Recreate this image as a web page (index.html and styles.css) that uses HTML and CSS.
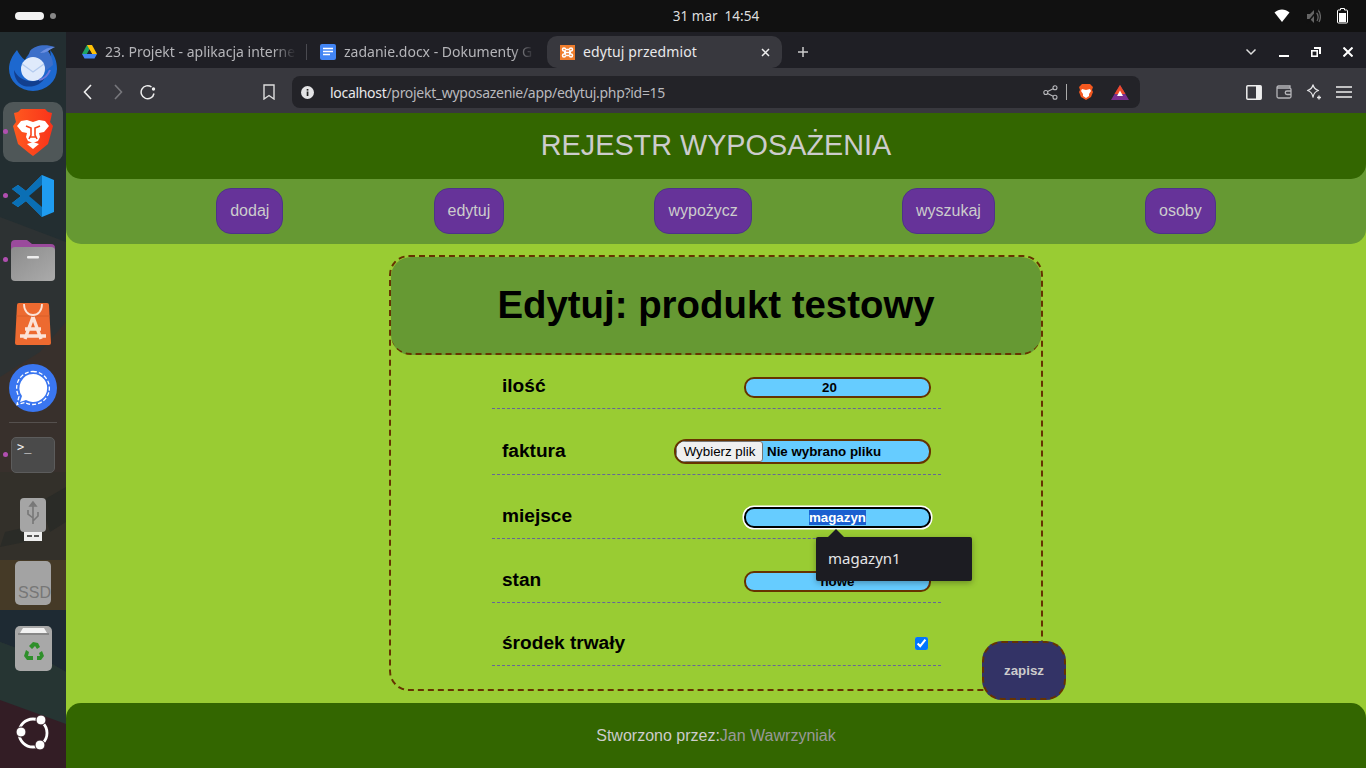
FILE: index.html
```html
<!DOCTYPE html>
<html lang="pl">
<head>
<meta charset="utf-8">
<title>edytuj przedmiot</title>
<link rel="stylesheet" href="styles.css">
</head>
<body>
<div class="topbar">
  <div class="workspaces"><span class="ws-pill"></span><span class="ws-dot"></span></div>
  <div class="clock">31 mar&nbsp;&nbsp;14:54</div>
  <div class="tray">
    <svg width="16" height="14" viewBox="0 0 16 14"><path d="M0.500 3.500C5 -0.600 11 -0.600 15.500 3.500L8 13Z" fill="#fff"/></svg>
    <svg width="15" height="15" viewBox="0 0 15 15" fill="#666"><path d="M1 5h3l4-4v13l-4-4H1z"/><path d="M10 3c2 2 3 6 1 9M12 1c3 3 3 9 1 12" fill="none" stroke="#666" stroke-width="1.300"/><path d="M1 14L12 1" stroke="#111" stroke-width="1.500"/></svg>
    <svg width="11" height="16" viewBox="0 0 11 16"><path d="M3.500 .5h4v1.500h2a1 1 0 0 1 1 1v11a1 1 0 0 1-1 1h-8a1 1 0 0 1-1-1V3a1 1 0 0 1 1-1h2z" fill="none" stroke="#fff"/><rect x="2" y="5" width="7" height="9" fill="#fff"/></svg>
  </div>
</div>
<div class="desktop">
  <aside class="dock">
    <svg class="dock-bg" width="66" height="736" viewBox="0 0 66 736">
      <rect width="66" height="736" fill="#232e31"/>
      <path d="M0 185L66 210V736H0Z" fill="#2d3233"/>
      <path d="M0 345L40 320L66 290V440H0Z" fill="#38302c"/>
      <path d="M0 440H66V528H0Z" fill="#33302a"/>
      <path d="M40 470L66 455V490L50 500ZM5 500L40 492L25 510L0 515Z" fill="#2a2b27"/>
      <path d="M0 528H66V578H0Z" fill="#453a27"/>
      <path d="M0 578H66V640L40 625L0 610Z" fill="#1e2a33"/>
      <path d="M0 610L40 625L66 640V736H0Z" fill="#263533"/>
      <path d="M0 668L66 692V736H0Z" fill="#331d25"/>
    </svg>
    <div class="dock-item dock-mail">
      <svg width="48" height="46" viewBox="0 0 48 46">
        <path d="M8 5C3 11 0 17 0 24a24 22 0 0 0 48 0C48 16 45 9 41 5l1 7C39 7 34 4 28 5c-6 1-10 5-12 10-3-2-6-6-8-10z" fill="#1d68cf"/>
        <path d="M21 6C26 0 36-1 46 2c-2 1-5 2-7 4 3 4 5 9 5 14L34 28 18 14z" fill="#3c6fc9"/>
        <path d="M46 2c-2 1-5 2-7 4-1 1-5 2-8 2 4-4 9-6 15-6z" fill="#6b8fe0"/>
        <circle cx="24" cy="24" r="12" fill="#dfeafb"/>
        <path d="M13 19l11 8 11-8" fill="none" stroke="#b3cbef" stroke-width="1.400"/>
        <path d="M5 25c5 11 19 15 31 7-3 8-13 11-21 9C9 39 5 33 5 25z" fill="#123f8f"/>
        <path d="M30 35c5-1 9-5 11-10" fill="none" stroke="#6f78d8" stroke-width="2"/>
      </svg>
    </div>
    <div class="dock-item is-active">
      <span class="run-dot"></span>
      <svg width="40" height="48" viewBox="0 0 40 48">
        <defs><linearGradient id="bravefill" x1="0" y1="0" x2="1" y2="0"><stop offset="0" stop-color="#ff5a1f"/><stop offset="1" stop-color="#f9331a"/></linearGradient></defs>
        <path d="M8 1h24l3 3 4 1-1 5-1 4 3 4-5 18-11 9-4 3-4-3-11-9L0 18l3-4-1-4-1-5 4-1z" fill="url(#bravefill)"/>
        <path d="M8 13l6-1 6 2 6-2 6 1 4 5-5 6-5 1 1 4-2 4-5 2-5-2-2-4 1-4-5-1-5-6z" fill="#fff"/>
        <path d="M13 18l5 2 0 7-2 4M27 18l-5 2 0 7 2 4M17 29h6" stroke="#f9431a" stroke-width="1.600" fill="none"/>
        <path d="M14 36l6-2 6 2-6 5z" fill="#fff"/>
      </svg>
    </div>
    <div class="dock-item">
      <span class="run-dot"></span>
      <svg width="42" height="42" viewBox="0 0 42 42">
        <path d="M30 0l12 5v32l-12 5-16-16-8 6-6-4 9-7-9-7 6-4 8 6z" fill="#1f9cf0"/>
        <path d="M30 0L14 16 6 10 0 14l9 7-9 7 6 4 8-6L30 42V30L20 21l10-9z" fill="#0a6fb5"/>
        <path d="M30 10v22l-13-11z" fill="#232e31"/>
      </svg>
    </div>
    <div class="dock-item">
      <span class="run-dot"></span>
      <svg width="44" height="41" viewBox="0 0 44 41">
        <path d="M0 4a4 4 0 0 1 4-4h12l5 4h19a4 4 0 0 1 4 4v8H0z" fill="#9a4a9c"/>
        <defs><linearGradient id="folderfill" x1="0" y1="0" x2="1" y2="1"><stop offset="0" stop-color="#8c8c8c"/><stop offset="1" stop-color="#ababab"/></linearGradient></defs>
        <rect y="7" width="44" height="34" rx="4" fill="url(#folderfill)"/>
        <rect x="16" y="16" width="12" height="2.500" rx="1" fill="#eee"/>
      </svg>
    </div>
    <div class="dock-item">
      <svg width="36" height="42" viewBox="0 0 36 42">
        <path d="M4 0h28a2 2 0 0 1 2 2l2 38a2 2 0 0 1-2 2H2a2 2 0 0 1-2-2L2 2a2 2 0 0 1 2-2z" fill="#ed6a30"/>
        <path d="M1.500 13H34.500" stroke="#d85f28" stroke-width="1"/>
        <path d="M9 1c0 7 4 11 9 11s9-4 9-11" fill="none" stroke="#fbe3d8" stroke-width="1.800"/>
        <path d="M18 14L10 36M18 14l8 22M5 33h26M10 26h16" stroke="#fbe3d8" stroke-width="3.400" fill="none"/>
      </svg>
    </div>
    <div class="dock-item">
      <svg width="48" height="48" viewBox="0 0 48 48">
        <circle cx="24" cy="24" r="24" fill="#3a76f0"/>
        <path d="M24 10a14 14 0 1 1-7 26l-6 2 2-6a14 14 0 0 1 11-22z" fill="#fff"/>
        <path d="M24 7.500a16.500 16.500 0 1 1-8 31l-8 2 2-8a16.500 16.500 0 0 1 14-25z" fill="none" stroke="#fff" stroke-width="1.300" stroke-dasharray="4 2"/>
      </svg>
    </div>
    <div class="dock-sep"></div>
    <div class="dock-item terminal-item">
      <span class="run-dot"></span>
      <div class="term"><span class="term-prompt">&gt;_</span></div>
    </div>
    <div class="dock-item usb-item">
      <svg width="26" height="44" viewBox="0 0 26 44">
        <rect x="4" y="32" width="18" height="11" fill="#eee"/>
        <rect x="7" y="37" width="5" height="2" fill="#555"/><rect x="14" y="37" width="5" height="2" fill="#555"/>
        <rect width="26" height="34" rx="4" fill="#a5a5a5"/>
        <path d="M13 4v22M13 4l-3 4h6zM13 20L8 16v-4M13 23l5-5v-4" fill="none" stroke="#777" stroke-width="1.600"/>
      </svg>
    </div>
    <div class="dock-item ssd-item"><div class="ssd">SSD</div></div>
    <div class="dock-item trash-item">
      <svg width="37" height="45" viewBox="0 0 37 45">
        <rect width="37" height="45" rx="5" fill="#a8a8a8"/>
        <path d="M5 7l3-5h21l3 5z" fill="#f2f2f2"/>
        <path d="M3 8h31" stroke="#666"/>
        <path d="M14 20l4-4 5 1 2 4-3 2-2-3-3 3zM27 25l2 5-3 4h-4v-4h3l-1-3zM11 24l-2 6 3 4h6v-4h-5l1-4z" fill="#2f8f2b"/>
      </svg>
    </div>
    <div class="dock-item ubuntu-item">
      <svg width="36" height="36" viewBox="0 0 36 36">
        <circle cx="18" cy="18" r="14" fill="none" stroke="#fff" stroke-width="2.800"/>
        <circle cx="6" cy="17" r="5" fill="#fff" stroke="#331d25"/>
        <circle cx="26" cy="5" r="5" fill="#fff" stroke="#331d25"/>
        <circle cx="25" cy="30" r="5" fill="#fff" stroke="#331d25"/>
      </svg>
    </div>
  </aside>
  <div class="browser">
    <div class="tabstrip">
      <div class="tab tab-first">
        <svg width="15" height="14" viewBox="0 0 15 14"><path d="M5 0h5l-5 9H0z" fill="#1fa463"/><path d="M5 0h5l5 9H10z" fill="#ffc107"/><path d="M0 9h15l-2.500 4.500h-10z" fill="#4285f4"/><path d="M7.500 4.500L5 9h5z" fill="#1f1f25"/></svg>
        <span class="tab-title">23. Projekt - aplikacja interne</span>
      </div>
      <span class="tab-sep"></span>
      <div class="tab tab-second">
        <svg width="16" height="16" viewBox="0 0 16 16"><rect width="16" height="16" rx="2" fill="#4285f4"/><path d="M3 4.500h10M3 7.500h10M3 10.500h7" stroke="#fff" stroke-width="1.500"/></svg>
        <span class="tab-title">zadanie.docx - Dokumenty G</span>
      </div>
      <div class="tab tab-active">
        <svg width="15" height="15" viewBox="0 0 15 15"><rect width="15" height="15" fill="#ef7d2c"/><path d="M6 6H4a1.500 1.500 0 1 1 1.500-1.500M9 6h2a1.500 1.500 0 1 0-1.500-1.500M6 9H4a1.500 1.500 0 1 0 1.500 1.500M9 9h2a1.500 1.500 0 1 1-1.500 1.500M5.500 4.500h4M5.500 10.500h4M4 7.500h7" fill="none" stroke="#fff" stroke-width="1.500"/></svg>
        <span class="tab-title">edytuj przedmiot</span>
        <svg class="tab-close" width="9" height="9" viewBox="0 0 9 9"><path d="M1 1l7 7M8 1L1 8" stroke="#eee" stroke-width="1.500"/></svg>
      </div>
      <svg class="new-tab" width="12" height="12" viewBox="0 0 12 12"><path d="M6 1v10M1 6h10" stroke="#ccc" stroke-width="1.500"/></svg>
      <div class="win-controls">
        <svg width="12" height="8" viewBox="0 0 12 8"><path d="M1.500 1.500L6 6l4.500-4.500" fill="none" stroke="#ddd" stroke-width="1.500"/></svg>
        <svg width="10" height="10" viewBox="0 0 10 10"><path d="M0 9h10" stroke="#fff" stroke-width="2"/></svg>
        <svg width="10" height="10" viewBox="0 0 10 10"><path d="M3 0h7v7H8V2H3z" fill="#fff"/><rect x=".8" y="3.800" width="5.400" height="5.400" fill="none" stroke="#fff" stroke-width="1.600"/></svg>
        <svg width="10" height="10" viewBox="0 0 10 10"><path d="M.5 .5l9 9M9.500 .5l-9 9" stroke="#fff" stroke-width="2"/></svg>
      </div>
    </div>
    <div class="toolbar">
      <div class="nav-buttons">
        <svg width="10" height="16" viewBox="0 0 10 16"><path d="M8 1L1.500 8 8 15" fill="none" stroke="#eee" stroke-width="1.600"/></svg>
        <svg width="10" height="16" viewBox="0 0 10 16"><path d="M2 1l6.500 7L2 15" fill="none" stroke="#77777c" stroke-width="1.600"/></svg>
        <svg width="16" height="16" viewBox="0 0 16 16"><path d="M14 9.500A6.500 6.500 0 1 1 11.500 3" fill="none" stroke="#eee" stroke-width="1.500"/><circle cx="13.500" cy="5" r="1.700" fill="#eee"/></svg>
      </div>
      <svg class="bookmark" width="12" height="16" viewBox="0 0 12 16"><path d="M1 1h10v14l-5-3.500L1 15z" fill="none" stroke="#ddd" stroke-width="1.400"/></svg>
      <div class="urlbar">
        <svg width="13" height="13" viewBox="0 0 13 13"><circle cx="6.500" cy="6.500" r="6.500" fill="#e4e4e6"/><rect x="5.700" y="5.500" width="1.700" height="4.500" fill="#222"/><rect x="5.700" y="3" width="1.700" height="1.600" fill="#222"/></svg>
        <span class="url"><span class="url-host">localhost</span>/projekt_wyposazenie/app/edytuj.php?id=15</span>
        <svg class="share" width="15" height="15" viewBox="0 0 15 15"><g fill="none" stroke="#b9b9bd" stroke-width="1.100"><circle cx="2.800" cy="7.500" r="2"/><circle cx="12" cy="2.800" r="2"/><circle cx="12" cy="12.200" r="2"/><path d="M4.600 6.500l5.600-2.800M4.600 8.500l5.600 2.800"/></g></svg>
        <span class="url-sep"></span>
        <svg width="16" height="18" viewBox="0 0 16 18"><path d="M4 1h8l3 3-1 3 1 2-2 5-5 3-5-3-2-5 1-2-1-3z" fill="#f4581f"/><path d="M4 6l4 1 4-1 1 2-2 3v2l-3 2-3-2v-2L3 8z" fill="#fff"/></svg>
        <svg class="bat" width="18" height="15" viewBox="0 0 18 15"><path d="M9 0L0 15h18z" fill="#7b2f8f"/><path d="M9 0L3.500 9h11z" fill="#ef4b2a"/><path d="M9 5.500L6 11h6z" fill="#fff"/></svg>
      </div>
      <div class="tool-icons">
        <svg width="16" height="15" viewBox="0 0 16 15"><rect x=".8" y=".8" width="14.400" height="13.400" rx="1" fill="none" stroke="#eee" stroke-width="1.500"/><rect x="10" y="1" width="5" height="13" fill="#eee"/></svg>
        <svg width="16" height="14" viewBox="0 0 16 14"><path d="M14 3V1H2.500A1.500 1.500 0 0 0 1 2.500v9A1.500 1.500 0 0 0 2.500 13h11a1.500 1.500 0 0 0 1.500-1.500V4.500A1.500 1.500 0 0 0 13.500 3H1" fill="none" stroke="#b5b5b9" stroke-width="1.300"/><path d="M15 6h-4a1.500 1.500 0 0 0 0 3.500h4" fill="none" stroke="#b5b5b9" stroke-width="1.300"/></svg>
        <svg width="16" height="16" viewBox="0 0 16 16"><path d="M7 1c.8 3 2 4.500 5.500 5.500C9 7.500 7.800 9 7 13c-.8-4-2-5.500-5.500-6.500C5 5.500 6.200 4 7 1z" fill="none" stroke="#e4e4e6" stroke-width="1.300" stroke-linejoin="round"/><path d="M13 11.500v4M11 13.500h4" stroke="#e4e4e6" stroke-width="1.400"/></svg>
        <svg width="16" height="12" viewBox="0 0 16 12"><path d="M0 1h16M0 6h16M0 11h16" stroke="#eee" stroke-width="1.300"/></svg>
      </div>
    </div>
    <div class="page">
      <header class="site-header">
        <h1 class="site-title">REJESTR WYPOSAŻENIA</h1>
      </header>
      <nav class="site-nav">
        <a class="nav-btn">dodaj</a>
        <a class="nav-btn">edytuj</a>
        <a class="nav-btn">wypożycz</a>
        <a class="nav-btn">wyszukaj</a>
        <a class="nav-btn">osoby</a>
      </nav>
      <main class="card">
        <div class="card-head"><h2 class="card-title">Edytuj: produkt testowy</h2></div>
        <form class="form">
          <div class="row row-a">
            <label class="row-label">ilość</label>
            <input class="field field-num" type="text" value="20">
          </div>
          <div class="row row-b">
            <label class="row-label">faktura</label>
            <div class="field field-file"><span class="file-btn">Wybierz plik</span><span class="file-name">Nie wybrano pliku</span></div>
          </div>
          <div class="row row-c">
            <label class="row-label">miejsce</label>
            <div class="field field-focus"><span class="selected">magazyn</span></div>
          </div>
          <div class="row row-d">
            <label class="row-label">stan</label>
            <input class="field" type="text" value="nowe">
          </div>
          <div class="row row-e">
            <label class="row-label">środek trwały</label>
            <input class="check" type="checkbox" checked>
          </div>
          <button class="save" type="button">zapisz</button>
          <div class="bubble"><span class="bubble-arrow"></span>magazyn1</div>
        </form>
      </main>
      <footer class="site-footer">Stworzono przez:<span class="author">Jan Wawrzyniak</span></footer>
    </div>
  </div>
</div>
</body>
</html>
```
FILE: styles.css
```css
* { box-sizing: border-box; }
html, body { margin: 0; height: 100%; overflow: hidden; background: #111; }
body { width: 1366px; height: 768px; display: flex; flex-direction: column; font-family: "Liberation Sans", Arial, sans-serif; }
svg { display: block; flex: none; }

.topbar { height: 32px; flex: none; background: #111; display: flex; align-items: center; position: relative; color: #ddd; font: 13.500px "Noto Sans", sans-serif; }
.workspaces { display: flex; align-items: center; gap: 6px; margin-left: 15px; }
.ws-pill { width: 29px; height: 8px; border-radius: 4px; background: #f2f2f2; }
.ws-dot { width: 6px; height: 6px; border-radius: 50%; background: #888; }
.clock { position: absolute; left: 66px; right: 0; text-align: center; }
.tray { margin-left: auto; margin-right: 18px; display: flex; align-items: center; gap: 16px; }

.desktop { flex: 1; display: flex; min-height: 0; }
.dock { width: 66px; flex: none; position: relative; display: flex; flex-direction: column; align-items: center; overflow: hidden; }
.dock-bg { position: absolute; left: 0; top: 0; }
.dock-item { position: relative; width: 60px; height: 60px; margin-bottom: 4px; border-radius: 10px; display: flex; align-items: center; justify-content: center; }
.dock-mail { margin-top: 6px; }
.is-active { background: #4f5758; }
.run-dot { position: absolute; left: 0; top: 27px; width: 5px; height: 5px; border-radius: 50%; background: #b04fb0; }
.dock-sep { position: relative; width: 48px; height: 1px; background: #55504e; margin: 0 0 4px; }
.terminal-item { height: 56px; margin-bottom: 15px; }
.terminal-item .run-dot { top: 25px; }
.term { width: 44px; height: 36px; border-radius: 5px; background: #4a4a4a; border: 1px solid #5c5c5c; padding: 0 5px; }
.term-prompt { display: block; color: #f2f2f2; font: 12px/18px "DejaVu Sans Mono", monospace; }
.usb-item { height: 44px; margin-bottom: 19px; }
.ssd-item { height: 44px; margin-bottom: 20px; }
.ssd { position: relative; width: 36px; height: 44px; border-radius: 5px; background: #a3a3a3; color: #777; font: 16px/20px "Liberation Sans", sans-serif; padding-top: 22px; text-align: right; overflow: hidden; }
.trash-item { height: 46px; margin-bottom: 44px; }
.ubuntu-item { height: 36px; }

.browser { flex: 1; min-width: 0; display: flex; flex-direction: column; }
.tabstrip { height: 36px; flex: none; background: #1f1f25; display: flex; align-items: center; position: relative; font: 14px/20px "Noto Sans", sans-serif; color: #b5b5b9; }
.tab { display: flex; align-items: center; height: 32px; align-self: flex-end; min-width: 0; }
.tab-title { white-space: nowrap; overflow: hidden; display: block; }
.tab-first { width: 215px; margin-left: 16px; gap: 8px; }
.tab-first .tab-title, .tab-second .tab-title { -webkit-mask-image: linear-gradient(to right, #000 88%, transparent); mask-image: linear-gradient(to right, #000 88%, transparent); }
.tab-first .tab-title { width: 191px; }
.tab-sep { width: 1px; height: 16px; background: #4a4a50; margin: 4px 13px 0 9px; }
.tab-second { width: 215px; gap: 8px; }
.tab-second .tab-title { width: 191px; }
.tab-active { width: 235px; margin-left: 12px; background: #38383e; border-radius: 10px; padding: 0 12px 0 13px; gap: 8px; color: #e8e8ea; letter-spacing: .1px; }
.tab-close { margin-left: auto; }
.new-tab { margin: 4px 0 0 15px; }
.win-controls { margin: 4px 13px 0 auto; display: flex; align-items: center; gap: 22px; }

.toolbar { height: 45px; flex: none; background: #38383e; display: flex; align-items: center; padding-top: 3px; }
.nav-buttons { display: flex; align-items: center; gap: 20px; margin-left: 17px; }
.nav-buttons svg:last-child { margin-left: -3px; }
.bookmark { margin-left: 107px; }
.urlbar { width: 848px; height: 32px; margin-left: 17px; border-radius: 8px; background: #232328; display: flex; align-items: center; padding: 0 11px 0 9px; font: 14px "Noto Sans", sans-serif; color: #b9b9bd; }
.url { margin-left: 16px; letter-spacing: -.3px; }
.url-host { color: #e8e8ea; }
.share { margin-left: auto; }
.url-sep { width: 1px; height: 16px; background: #aaa; margin: 0 11px 0 8px; }
.bat { margin-left: 17px; }
.tool-icons { display: flex; align-items: center; gap: 14px; margin-left: 106px; }

.page { flex: 1; min-height: 0; background: #99cc33; display: flex; flex-direction: column; align-items: stretch; }
.site-header { height: 66px; flex: none; background: #336600; border-radius: 0 0 15px 15px; display: flex; align-items: center; justify-content: center; position: relative; padding-bottom: 2px; }
.site-title { margin: 0; font-size: 28.800px; font-weight: 400; color: #ccc; }
.site-nav { height: 80px; margin-top: -15px; padding-top: 14px; flex: none; background: #669933; border-radius: 0 0 15px 15px; display: flex; justify-content: space-evenly; align-items: center; }
.nav-btn { height: 46px; display: flex; align-items: center; padding: 0 13px; background: #663399; border: 1px solid #4d3388; border-radius: 15px; color: #ccc; font-size: 16px; }
.card { width: 654px; height: 436px; margin: 11px auto 12px; flex: none; border: 2px dashed #663300; border-radius: 20px; }
.card-head { height: 98px; border-bottom: 2px dashed #663300; border-radius: 20px; background: #669933; display: flex; align-items: center; justify-content: center; }
.card-title { margin: 0; font-size: 38.400px; font-weight: 700; color: #000; }
.form { position: relative; width: 449px; margin-left: 101px; }
.row { display: flex; align-items: center; justify-content: space-between; padding: 0 10px; border-bottom: 1px dashed #666699; }
.row-a { height: 54px; padding-top: 8px; }
.row-b { height: 66px; padding-top: 18px; }
.row-c { height: 64px; padding-top: 18px; }
.row-d { height: 64px; padding-top: 18px; }
.row-e { height: 63px; padding-top: 18px; }
.row-label { font-size: 19.100px; font-weight: 700; color: #000; }
.field { width: 187px; height: 21px; margin: 3px 0 0; padding: 0; border: 2px solid #663300; border-radius: 10px; background: #66ccff; color: #000; text-align: center; font: 700 13.333px "Liberation Sans", sans-serif; outline: none; }
.field-num { padding-right: 16px; }
.field-file { width: 257px; height: 25px; margin-top: 2px; display: flex; align-items: center; text-align: left; border-radius: 12px; overflow: hidden; }
.file-btn { width: 87px; height: 21px; display: flex; align-items: center; justify-content: center; font-weight: 400; background: #efefef; border: 1px solid #767676; border-radius: 3px; }
.file-name { margin-left: 4px; }
.field-focus { display: flex; align-items: center; justify-content: center; border-color: #000; box-shadow: 0 0 0 1.500px #fff; }
.selected { background: #1a5fd0; color: #fff; line-height: 15px; }
.check { width: 13px; height: 13px; margin: 0 3px 0 0; accent-color: #0075ff; }
.save { position: absolute; left: 490px; top: 286px; width: 84px; height: 59px; border: 2px dashed #663300; border-radius: 20px; background: #333366; color: #ccc; font: 700 13.333px "Liberation Sans", sans-serif; padding: 0; }
.bubble { position: absolute; left: 324px; top: 182px; width: 156px; height: 44px; background: #1c1c22; border-radius: 2px; box-shadow: 0 2px 6px rgba(0,0,0,.3); color: #e4e4e6; font: 15px/42px "Noto Sans", sans-serif; padding-left: 12px; }
.bubble-arrow { position: absolute; left: 12px; top: -8px; width: 0; height: 0; border: solid transparent; border-width: 0 8px 8px; border-bottom-color: #1c1c22; }
.site-footer { height: 65px; flex: none; background: #336600; border-radius: 15px 15px 0 0; display: flex; align-items: center; justify-content: center; color: #ccc; font-size: 16px; }
.author { color: #999; }
```
